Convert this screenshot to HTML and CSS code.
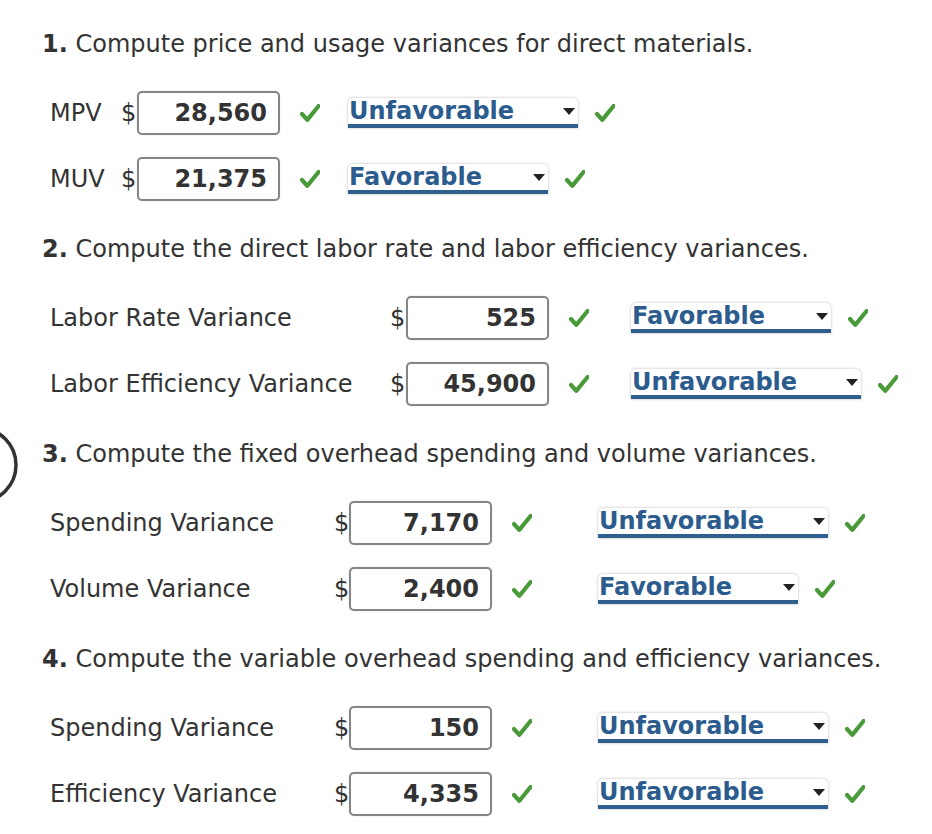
FILE: index.html
```html
<!DOCTYPE html>
<html lang="en">
<head>
<meta charset="utf-8">
<title>Variances</title>
<link rel="stylesheet" href="styles.css">
</head>
<body>
<svg class="ring" width="40" height="100" viewBox="0 0 40 100" aria-hidden="true"><circle cx="-21" cy="52" r="37" fill="none" stroke="#333" stroke-width="3.5"/></svg>
<main class="page">
  <section class="part g1">
    <h2 class="q"><b>1.</b> Compute price and usage variances for direct materials.</h2>
    <div class="row">
      <span class="lbl">MPV</span><span class="cur">$</span><span class="field">28,560</span>
      <span class="ok"><svg class="chk" viewBox="0 0 20 18"><path d="M2 10 L7.3 15.8 L18.6 2"/></svg></span>
      <span class="pick"><span class="sel w-u">Unfavorable<i class="arr"></i></span><svg class="chk" viewBox="0 0 20 18"><path d="M2 10 L7.3 15.8 L18.6 2"/></svg></span>
    </div>
    <div class="row">
      <span class="lbl">MUV</span><span class="cur">$</span><span class="field">21,375</span>
      <span class="ok"><svg class="chk" viewBox="0 0 20 18"><path d="M2 10 L7.3 15.8 L18.6 2"/></svg></span>
      <span class="pick"><span class="sel w-f">Favorable<i class="arr"></i></span><svg class="chk" viewBox="0 0 20 18"><path d="M2 10 L7.3 15.8 L18.6 2"/></svg></span>
    </div>
  </section>

  <section class="part g2">
    <h2 class="q"><b>2.</b> Compute the direct labor rate and labor efficiency variances.</h2>
    <div class="row">
      <span class="lbl">Labor Rate Variance</span><span class="cur">$</span><span class="field">525</span>
      <span class="ok"><svg class="chk" viewBox="0 0 20 18"><path d="M2 10 L7.3 15.8 L18.6 2"/></svg></span>
      <span class="pick"><span class="sel w-f">Favorable<i class="arr"></i></span><svg class="chk" viewBox="0 0 20 18"><path d="M2 10 L7.3 15.8 L18.6 2"/></svg></span>
    </div>
    <div class="row">
      <span class="lbl">Labor Efficiency Variance</span><span class="cur">$</span><span class="field">45,900</span>
      <span class="ok"><svg class="chk" viewBox="0 0 20 18"><path d="M2 10 L7.3 15.8 L18.6 2"/></svg></span>
      <span class="pick"><span class="sel w-u">Unfavorable<i class="arr"></i></span><svg class="chk" viewBox="0 0 20 18"><path d="M2 10 L7.3 15.8 L18.6 2"/></svg></span>
    </div>
  </section>

  <section class="part g3">
    <h2 class="q"><b>3.</b> Compute the fixed overhead spending and volume variances.</h2>
    <div class="row">
      <span class="lbl">Spending Variance</span><span class="cur">$</span><span class="field">7,170</span>
      <span class="ok"><svg class="chk" viewBox="0 0 20 18"><path d="M2 10 L7.3 15.8 L18.6 2"/></svg></span>
      <span class="pick"><span class="sel w-u">Unfavorable<i class="arr"></i></span><svg class="chk" viewBox="0 0 20 18"><path d="M2 10 L7.3 15.8 L18.6 2"/></svg></span>
    </div>
    <div class="row">
      <span class="lbl">Volume Variance</span><span class="cur">$</span><span class="field">2,400</span>
      <span class="ok"><svg class="chk" viewBox="0 0 20 18"><path d="M2 10 L7.3 15.8 L18.6 2"/></svg></span>
      <span class="pick"><span class="sel w-f">Favorable<i class="arr"></i></span><svg class="chk" viewBox="0 0 20 18"><path d="M2 10 L7.3 15.8 L18.6 2"/></svg></span>
    </div>
  </section>

  <section class="part g3">
    <h2 class="q"><b>4.</b> Compute the variable overhead spending and efficiency variances.</h2>
    <div class="row">
      <span class="lbl">Spending Variance</span><span class="cur">$</span><span class="field">150</span>
      <span class="ok"><svg class="chk" viewBox="0 0 20 18"><path d="M2 10 L7.3 15.8 L18.6 2"/></svg></span>
      <span class="pick"><span class="sel w-u">Unfavorable<i class="arr"></i></span><svg class="chk" viewBox="0 0 20 18"><path d="M2 10 L7.3 15.8 L18.6 2"/></svg></span>
    </div>
    <div class="row">
      <span class="lbl">Efficiency Variance</span><span class="cur">$</span><span class="field">4,335</span>
      <span class="ok"><svg class="chk" viewBox="0 0 20 18"><path d="M2 10 L7.3 15.8 L18.6 2"/></svg></span>
      <span class="pick"><span class="sel w-u">Unfavorable<i class="arr"></i></span><svg class="chk" viewBox="0 0 20 18"><path d="M2 10 L7.3 15.8 L18.6 2"/></svg></span>
    </div>
  </section>
</main>
</body>
</html>
```

FILE: styles.css
```css
html, body {
  margin: 0;
  padding: 0;
  background: #fff;
}
body {
  font-family: "DejaVu Sans", Verdana, sans-serif;
  font-size: 24px;
  color: #333;
  position: relative;
  width: 932px;
  height: 834px;
  overflow: hidden;
}
.ring {
  position: absolute;
  left: 0;
  top: 413px;
}
.page {
  padding-top: 27px;
}
.part {
  margin-bottom: 20px;
}
.q {
  margin: 0 0 19px 0;
  padding-left: 42px;
  font-size: 24px;
  font-weight: normal;
  line-height: 34px;
  color: #333;
  white-space: nowrap;
}
.q b {
  font-weight: bold;
}
.row {
  display: grid;
  align-items: center;
  height: 66px;
  padding-left: 50px;
}
.g1 .row { grid-template-columns: 70px 17px 143px 68px auto; }
.g2 .row { grid-template-columns: 339px 17px 143px 82px auto; }
.g3 .row { grid-template-columns: 283px 16px 143px 106px auto; }
.lbl {
  white-space: nowrap;
}
.cur {
  padding-left: 1px;
}
.field {
  box-sizing: border-box;
  height: 44px;
  border: 2px solid #858585;
  border-radius: 5px;
  box-shadow: 0 0 1px #aaa;
  text-align: right;
  padding-right: 11px;
  font-weight: bold;
  line-height: 40px;
  color: #333;
}
.ok {
  padding-left: 20px;
  display: flex;
  align-items: center;
}
.chk {
  width: 20px;
  height: 18px;
  fill: none;
  stroke: #4a9a3a;
  stroke-width: 4.2;
  stroke-linecap: round;
  stroke-linejoin: round;
  display: block;
}
.pick {
  display: flex;
  align-items: center;
  gap: 17px;
}
.sel {
  position: relative;
  box-sizing: border-box;
  height: 30px;
  line-height: 26px;
  padding-left: 1px;
  background: #fff;
  border-radius: 5px 5px 0 0;
  box-shadow: 0 0 3px rgba(0, 0, 0, 0.28);
  border-bottom: 4px solid #2f5f8f;
  color: #2b5c8d;
  font-weight: bold;
  white-space: nowrap;
}
.w-u { width: 230px; }
.w-f { width: 200px; }
.arr {
  position: absolute;
  right: 3px;
  top: 10px;
  width: 0;
  height: 0;
  border-left: 6px solid transparent;
  border-right: 6px solid transparent;
  border-top: 7px solid #222;
}
```
